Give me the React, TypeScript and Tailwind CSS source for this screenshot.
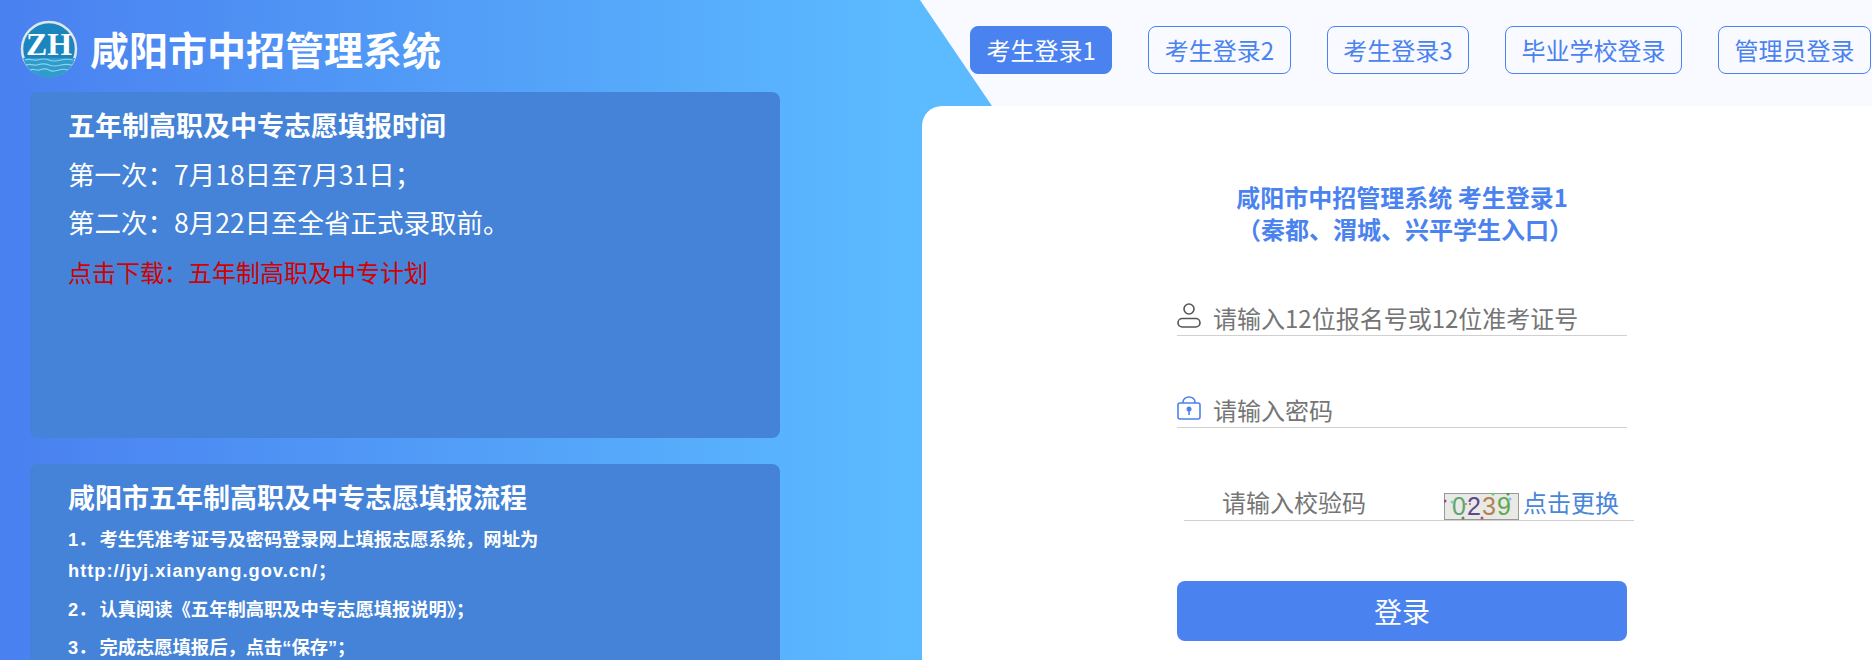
const tabs = ["考生登录1", "考生登录2", "考生登录3", "毕业学校登录", "管理员登录"];

function Logo() {
  return (
    <svg width="58" height="58" viewBox="0 0 58 58" className="shrink-0">
      <circle cx="29" cy="29" r="27" fill="#1b86bd" stroke="#dfe6ea" strokeWidth="2.5" />
      <path d="M3 38h52a27 27 0 0 1-52 0Z" fill="#2f9ccb" />
      <text x="6" y="35" textLength="46" lengthAdjust="spacingAndGlyphs" fontFamily="Liberation Serif" fontWeight="700" fontSize="31" fill="#fff">
        ZH
      </text>
      <path d="M5 40c5-2 8 1 12 0s8-2 12 0 8 1 12 0 8-1 12 0" fill="none" stroke="#8fd0ea" strokeWidth="1.2" />
      <path d="M6 45c5-2 8 1 11 0s8-2 12 0 8 1 12 0 7-1 11 0" fill="none" stroke="#8fd0ea" strokeWidth="1.2" />
      <path d="M10 50c4-2 6 1 9 0s7-2 10 0 7 1 10 0 6-1 9 0" fill="none" stroke="#8fd0ea" strokeWidth="1.2" />
    </svg>
  );
}

function UserIcon() {
  return (
    <svg width="24" height="25" viewBox="0 0 24 25" fill="none" stroke="#555" strokeWidth="1.6" className="mt-[7px] shrink-0">
      <circle cx="12" cy="6" r="5" />
      <rect x="1" y="15.5" width="22" height="8.5" rx="4.25" />
    </svg>
  );
}

function LockIcon() {
  return (
    <svg width="24" height="24" viewBox="0 0 24 24" fill="none" stroke="#4a82f0" strokeWidth="1.6" className="mt-[8px] shrink-0">
      <path d="M6 7V6a6 5 0 0 1 12 0v1" />
      <rect x="1" y="7" width="22" height="16" rx="2" />
      <circle cx="12" cy="13" r="2.5" fill="#4a82f0" stroke="none" />
      <path d="M12 14v5" />
    </svg>
  );
}

function Captcha() {
  return (
    <svg width="75" height="27" viewBox="0 0 75 27" className="shrink-0">
      <rect x="0.5" y="0.5" width="74" height="26" fill="#e9e9e6" stroke="#999" />
      <text x="8" y="22" fontFamily="Liberation Sans" fontSize="25" fill="#5fa56f">0</text>
      <text x="23" y="22" fontFamily="Liberation Sans" fontSize="25" fill="#5b4a8c">2</text>
      <text x="38" y="22" fontFamily="Liberation Sans" fontSize="25" fill="#b08355">3</text>
      <text x="53" y="22" fontFamily="Liberation Sans" fontSize="25" fill="#5fa84e">9</text>
      <circle cx="1" cy="8" r="1.5" fill="#a0408c" />
      <circle cx="8" cy="9" r="1.5" fill="#70d8c8" />
      <circle cx="22" cy="11" r="1" fill="#a08050" />
      <circle cx="26" cy="11" r="1" fill="#a05090" />
      <circle cx="49" cy="1" r="1.5" fill="#60d060" />
      <circle cx="64" cy="1" r="1.5" fill="#509050" />
      <circle cx="66" cy="6" r="1.5" fill="#70c8f0" />
      <circle cx="19" cy="25" r="1.5" fill="#708050" />
      <circle cx="38" cy="25" r="1.5" fill="#c05060" />
    </svg>
  );
}

export default function App() {
  return (
    <div className="flex h-[660px] w-full overflow-hidden bg-[#f8faff] font-['Noto_Sans_CJK_SC',sans-serif]">
      {/* left */}
      <div className="h-full w-[920px] shrink-0 bg-gradient-to-r from-[#4a80f0] to-[#5cbbff] px-[30px] text-white">
        <div className="-ml-[10px] flex h-[92px] items-center gap-[12px] pt-[5px]">
          <Logo />
          <h1 className="text-[39px] leading-none font-bold">咸阳市中招管理系统</h1>
        </div>
        <div className="h-[346px] w-[750px] rounded-lg bg-[#4483d8] pt-[13px] pl-[38px]">
          <h2 className="text-[27px] leading-[40px] font-bold">五年制高职及中专志愿填报时间</h2>
          <p className="mt-[5px] text-[26.5px] leading-[48px]">第一次：7月18日至7月31日；</p>
          <p className="text-[26.5px] leading-[48px]">第二次：8月22日至全省正式录取前。</p>
          <p className="mt-[2px] text-[24px] leading-[48px] text-[#d40000]">点击下载：五年制高职及中专计划</p>
        </div>
        <div className="mt-[26px] h-[300px] w-[750px] rounded-lg bg-[#4483d8] pt-[13px] pl-[38px]">
          <h2 className="text-[27px] leading-[40px] font-bold">咸阳市五年制高职及中专志愿填报流程</h2>
          <div className="mt-[7px] font-['Liberation_Sans','Noto_Sans_CJK_SC',sans-serif] text-[18.3px] leading-[31px] font-bold">
            <p>1．<span className="ml-[3px]">考生凭准考证号及密码登录网上填报志愿系统，网址为</span></p>
            <p className="tracking-[1px]">http://jyj.xianyang.gov.cn/；</p>
            <p className="mt-[8px]">2．<span className="ml-[3px]">认真阅读《五年制高职及中专志愿填报说明》；</span></p>
            <p className="mt-[7px]">3．<span className="ml-[3px]">完成志愿填报后，点击“保存”；</span></p>
          </div>
        </div>
      </div>

      {/* right */}
      <div className="flex min-w-0 flex-1 flex-col bg-[#5cbbff]">
        <div className="flex h-[106px] shrink-0 bg-[#f8faff]">
          <svg width="74" height="106" viewBox="0 0 74 106" className="-mr-[24px] shrink-0">
            <path d="M0 0L72 106H0Z" fill="#5cbbff" />
          </svg>
          <div className="flex h-[48px] translate-y-[26px] gap-[36px]">
            {tabs.map((tab, i) => (
              <div
                key={tab}
                className={
                  i === 0
                    ? "rounded-lg border border-[#4a82f0] bg-[#4a82f0] px-[15.5px] text-[24px] leading-[46px] whitespace-nowrap text-white"
                    : "rounded-lg border border-[#4a82f0] px-[15.5px] text-[24px] leading-[46px] whitespace-nowrap text-[#4a82f0]"
                }
              >
                {tab}
              </div>
            ))}
          </div>
        </div>

        <div className="ml-[2px] flex-1 rounded-tl-[20px] bg-white pt-[75px] pl-[255px]">
          <div className="w-[450px]">
            <h2 className="text-center text-[24px] leading-[32px] font-bold text-[#4a82f0]">
              咸阳市中招管理系统 考生登录1
              <br />
              <span className="pl-[6px]">（秦都、渭城、兴平学生入口）</span>
            </h2>
            <div className="mt-[51px] flex h-[40px] items-start gap-[12px] border-b border-[#d0d0d0]">
              <UserIcon />
              <input
                placeholder="请输入12位报名号或12位准考证号"
                className="h-[39px] min-w-0 flex-1 pt-[3px] text-[24px] outline-none placeholder:text-[#757575]"
              />
            </div>
            <div className="mt-[52px] flex h-[40px] items-start gap-[12px] border-b border-[#d0d0d0]">
              <LockIcon />
              <input
                placeholder="请输入密码"
                className="h-[39px] min-w-0 flex-1 pt-[3px] text-[24px] outline-none placeholder:text-[#757575]"
              />
            </div>
            <div className="mt-[53px] ml-[7px] flex h-[40px] w-[450px] items-end border-b border-[#d0d0d0] pl-[38px]">
              <input
                placeholder="请输入校验码"
                className="w-[222px] pt-[2px] text-[24px] outline-none placeholder:text-[#757575]"
              />
              <Captcha />
              <a className="ml-[4px] text-[24px] leading-[36px] whitespace-nowrap text-[#4a86d8]">点击更换</a>
            </div>
            <button className="mt-[60px] h-[60px] w-full rounded-lg bg-[#4a82f0] text-[28px] text-white">登录</button>
          </div>
        </div>
      </div>
    </div>
  );
}
